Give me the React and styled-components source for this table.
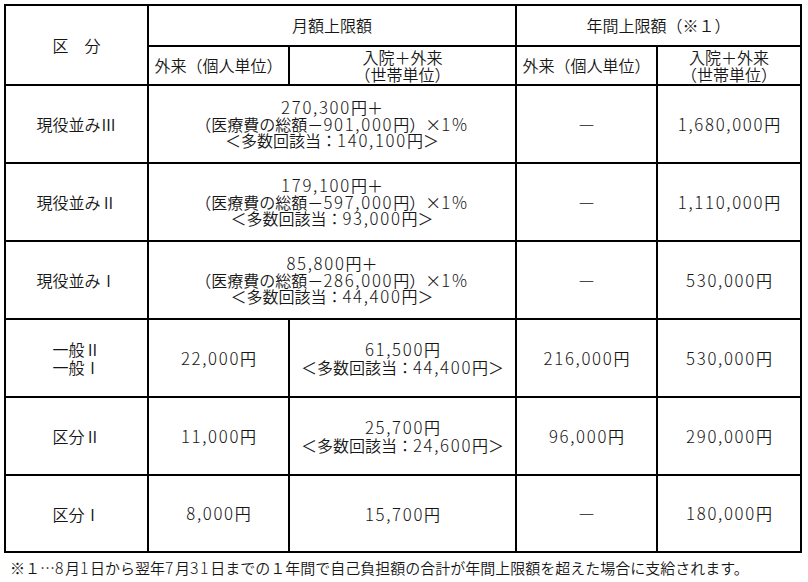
import React from "react";
import styled, { createGlobalStyle } from "styled-components";

const GlobalStyle = createGlobalStyle`
  html, body {
    margin: 0;
    padding: 0;
    background: #fff;
  }
  body {
    font-family: "Noto Sans CJK JP", "Noto Sans", sans-serif;
    color: #161616;
  }
`;

const Page = styled.div`
  padding: 4px;
`;

const Grid = styled.div`
  display: grid;
  grid-template-columns: 141px 139px 225px 139px 142px;
  grid-template-rows: 39px 37px repeat(5, 76px) 75px;
  gap: 2px;
  padding: 2px;
  background: #000;
  width: max-content;
`;

const Cell = styled.div`
  grid-column: span ${(p) => p.$cols || 1};
  grid-row: span ${(p) => p.$rows || 1};
  background: #fff;
  display: flex;
  flex-direction: column;
  align-items: center;
  justify-content: center;
  text-align: center;
  font-size: 16px;
  font-weight: 350;
  white-space: nowrap;
`;

const Line = styled.span`
  display: block;
  line-height: ${(p) => p.$lh}px;
`;

// half-width figures in the original are wide, round and thin
const Num = styled.span`
  font-size: 1.05em;
  font-weight: 300;
  letter-spacing: 0.1em;
  line-height: 1;
`;

const Note = styled.p`
  margin: 6px 0 0 6px;
  font-size: 15px;
  font-weight: 350;
  line-height: 18px;
  white-space: nowrap;
`;

const withNums = (text) =>
  text
    .split(/([0-9][0-9,]*%?)/)
    .map((part, i) => (i % 2 ? <Num key={i}>{part}</Num> : part));

const rows = [
  {
    label: ["現役並みⅢ"],
    monthly: ["270,300円＋", "（医療費の総額－901,000円）×1%", "＜多数回該当：140,100円＞"],
    yearOut: "―",
    yearAll: "1,680,000円",
  },
  {
    label: ["現役並みⅡ"],
    monthly: ["179,100円＋", "（医療費の総額－597,000円）×1%", "＜多数回該当：93,000円＞"],
    yearOut: "―",
    yearAll: "1,110,000円",
  },
  {
    label: ["現役並みⅠ"],
    monthly: ["85,800円＋", "（医療費の総額－286,000円）×1%", "＜多数回該当：44,400円＞"],
    yearOut: "―",
    yearAll: "530,000円",
  },
  {
    label: ["一般Ⅱ", "一般Ⅰ"],
    out: "22,000円",
    all: ["61,500円", "＜多数回該当：44,400円＞"],
    yearOut: "216,000円",
    yearAll: "530,000円",
  },
  {
    label: ["区分Ⅱ"],
    out: "11,000円",
    all: ["25,700円", "＜多数回該当：24,600円＞"],
    yearOut: "96,000円",
    yearAll: "290,000円",
  },
  {
    label: ["区分Ⅰ"],
    out: "8,000円",
    all: ["15,700円"],
    yearOut: "―",
    yearAll: "180,000円",
  },
];

const Lines = ({ items, lh = 17 }) =>
  items.map((t, i) => (
    <Line key={i} $lh={lh}>
      {withNums(t)}
    </Line>
  ));

export default function App() {
  return (
    <Page>
      <GlobalStyle />
      <Grid>
        <Cell $rows={2}>
          <Lines items={["区　分"]} />
        </Cell>
        <Cell $cols={2}>
          <Lines items={["月額上限額"]} />
        </Cell>
        <Cell $cols={2}>
          <Lines items={["年間上限額（※１）"]} />
        </Cell>
        <Cell>
          <Lines items={["外来（個人単位）"]} />
        </Cell>
        <Cell>
          <Lines items={["入院＋外来", "（世帯単位）"]} />
        </Cell>
        <Cell>
          <Lines items={["外来（個人単位）"]} />
        </Cell>
        <Cell>
          <Lines items={["入院＋外来", "（世帯単位）"]} />
        </Cell>

        {rows.map((r, i) => (
          <React.Fragment key={i}>
            <Cell>
              <Lines items={r.label} lh={18} />
            </Cell>
            {r.monthly ? (
              <Cell $cols={2}>
                <Lines items={r.monthly} lh={16} />
              </Cell>
            ) : (
              <>
                <Cell>
                  <Lines items={[r.out]} />
                </Cell>
                <Cell>
                  <Lines items={r.all} lh={18} />
                </Cell>
              </>
            )}
            <Cell>
              <Lines items={[r.yearOut]} />
            </Cell>
            <Cell>
              <Lines items={[r.yearAll]} />
            </Cell>
          </React.Fragment>
        ))}
      </Grid>
      <Note>
        {withNums(
          "※１…8月1日から翌年7月31日までの１年間で自己負担額の合計が年間上限額を超えた場合に支給されます。"
        )}
      </Note>
    </Page>
  );
}
